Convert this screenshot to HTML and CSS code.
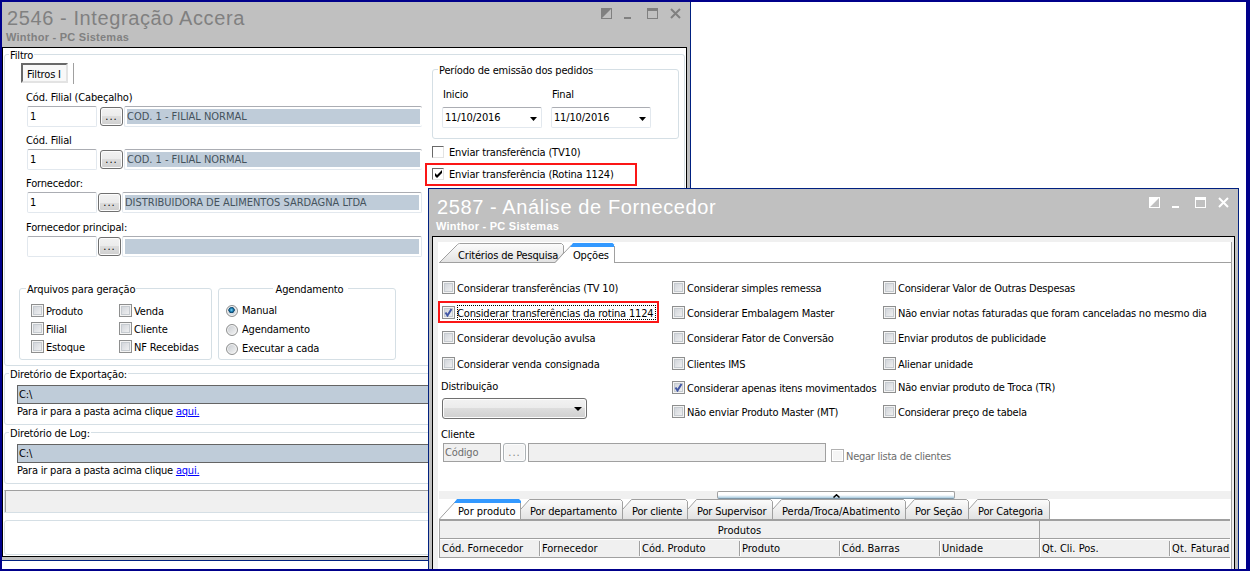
FILE: index.html
```html
<!DOCTYPE html>
<html lang="pt-BR">

<head>
    <meta charset="UTF-8">
    <meta name="viewport" content="width=device-width, initial-scale=1.0">
    <title>2587 - Análise de Fornecedor</title>
    <link rel="stylesheet" href="styles.css">
</head>

<body>
    <div class="desktop">

        <!-- 2546 -->
        <div class="window integracao">
            <div class="titlebar">
                <div>
                    <h1>2546 - Integração Accera</h1>
                    <h2>Winthor - PC Sistemas</h2>
                </div>
                <svg class="controls" width="80" height="11" viewBox="0 0 80 11">
                    <path d="M0 0H11V11H0ZM10 1V10H1Z" fill="currentColor" fill-rule="evenodd" />
                    <path d="M23 9h7v2h-7z" fill="currentColor" />
                    <path d="M46 0h11v11H46zM47 3v7h9V3z" fill="currentColor" fill-rule="evenodd" />
                    <path d="M70 1l9 9M79 1l-9 9" stroke="currentColor" stroke-width="2" />
                </svg>
            </div>
            <div class="content">
                <fieldset class="filtro">
                    <legend>Filtro</legend>
                    <div class="columns">
                        <div class="left">
                            <div class="toolbar">
                                <span class="pressed">Filtros I</span>
                            </div>
                            <div class="field">
                                <label>Cód. Filial (Cabeçalho)</label>
                                <div class="row">
                                    <span class="input">1</span>
                                    <span class="btn">...</span>
                                    <span class="readonly open"><b>COD. 1 - FILIAL NORMAL</b></span>
                                </div>
                            </div>
                            <div class="field">
                                <label>Cód. Filial</label>
                                <div class="row">
                                    <span class="input">1</span>
                                    <span class="btn">...</span>
                                    <span class="readonly open"><b>COD. 1 - FILIAL NORMAL</b></span>
                                </div>
                            </div>
                            <div class="field">
                                <label>Fornecedor:</label>
                                <div class="row near">
                                    <span class="input">1</span>
                                    <span class="btn">...</span>
                                    <span class="readonly"><b>DISTRIBUIDORA DE ALIMENTOS SARDAGNA LTDA</b></span>
                                </div>
                            </div>
                            <div class="field last">
                                <label>Fornecedor principal:</label>
                                <div class="row near">
                                    <span class="input"></span>
                                    <span class="btn">...</span>
                                    <span class="readonly"><b></b></span>
                                </div>
                            </div>
                            <div class="groups">
                                <fieldset class="arquivos">
                                    <legend>Arquivos para geração</legend>
                                    <div class="checks">
                                        <label class="check"><i></i>Produto</label>
                                        <label class="check"><i></i>Venda</label>
                                        <label class="check"><i></i>Filial</label>
                                        <label class="check"><i></i>Cliente</label>
                                        <label class="check"><i></i>Estoque</label>
                                        <label class="check"><i></i>NF Recebidas</label>
                                    </div>
                                </fieldset>
                                <fieldset class="agendamento">
                                    <legend>Agendamento</legend>
                                    <label class="radio"><i class="on"></i>Manual</label>
                                    <label class="radio"><i></i>Agendamento</label>
                                    <label class="radio"><i></i>Executar a cada</label>
                                </fieldset>
                            </div>
                        </div>
                        <div class="right">
                            <fieldset class="periodo">
                                <legend>Período de emissão dos pedidos</legend>
                                <div class="dates">
                                    <div>
                                        <label>Inicio</label>
                                        <span class="input date">11/10/2016<svg width="7" height="4"><path d="M0 0h7L3.500 4z" /></svg></span>
                                    </div>
                                    <div>
                                        <label>Final</label>
                                        <span class="input date">11/10/2016<svg width="7" height="4"><path d="M0 0h7L3.500 4z" /></svg></span>
                                    </div>
                                </div>
                            </fieldset>
                            <label class="check sunken"><i></i>Enviar transferência (TV10)</label>
                            <label class="check sunken marked"><i><svg width="9" height="9"><path d="M1 3v3l2 2 5-5V0L3 5z" /></svg></i>Enviar transferência (Rotina 1124)</label>
                        </div>
                    </div>
                </fieldset>
                <fieldset class="dir">
                    <legend>Diretório de Exportação:</legend>
                    <span class="path">C:\</span>
                    <p>Para ir para a pasta acima clique <a href="#">aqui.</a></p>
                </fieldset>
                <fieldset class="dir">
                    <legend>Diretório de Log:</legend>
                    <span class="path">C:\</span>
                    <p>Para ir para a pasta acima clique <a href="#">aqui.</a></p>
                </fieldset>
                <div class="progress"></div>
                <div class="bottom"></div>
            </div>
        </div>

        <!-- 2587 -->
        <div class="window fornecedor">
            <div class="titlebar">
                <div>
                    <h1>2587 - Análise de Fornecedor</h1>
                    <h2>Winthor - PC Sistemas</h2>
                </div>
                <svg class="controls" width="80" height="11" viewBox="0 0 80 11">
                    <path d="M0 0H11V11H0ZM10 1V10H1Z" fill="currentColor" fill-rule="evenodd" />
                    <path d="M23 9h7v2h-7z" fill="currentColor" />
                    <path d="M46 0h11v11H46zM47 3v7h9V3z" fill="currentColor" fill-rule="evenodd" />
                    <path d="M70 1l9 9M79 1l-9 9" stroke="currentColor" stroke-width="2" />
                </svg>
            </div>
            <div class="content">
                <div class="pane">
                    <div class="tabs top">
                        <div class="tab t1">
                            <svg width="125" height="20"><path d="M.5 19.500L18.500 1.500q1-1 2-1H122.500l2 2V10l-8 9.500z" fill="url(#shade)" stroke="#a0a0a0" /></svg>
                            <span>Critérios de Pesquisa</span>
                        </div>
                        <div class="tab t2">
                            <svg width="61" height="20"><path d="M0 20L17 1.500h42V20z" fill="#fff" /><path d="M0 19.500L16.500 2M59.500 3V19.500" fill="none" stroke="#a0a0a0" /><path d="M15 4L18 0H57.500L59 1.500V4z" fill="#3399ff" /></svg>
                            <span>Opções</span>
                        </div>
                    </div>

                    <div class="options">
                        <div class="column c1">
                            <label class="check"><i></i>Considerar transferências (TV 10)</label>
                            <label class="check marked"><i><svg width="9" height="9"><path d="M1.500 4.500L3.500 7.500 7.500 1" fill="none" stroke="#4257a5" stroke-width="2" /></svg></i>Considerar transferências da rotina 1124</label>
                            <label class="check"><i></i>Considerar devolução avulsa</label>
                            <label class="check"><i></i>Considerar venda consignada</label>
                            <span class="caption">Distribuição</span>
                            <span class="combo"><svg width="8" height="4"><path d="M0 0h8L4 4z" /></svg></span>
                        </div>
                        <div class="column c2">
                            <label class="check"><i></i>Considerar simples remessa</label>
                            <label class="check"><i></i>Considerar Embalagem Master</label>
                            <label class="check"><i></i>Considerar Fator de Conversão</label>
                            <label class="check"><i></i>Clientes IMS</label>
                            <label class="check"><i><svg width="9" height="9"><path d="M1.500 4.500L3.500 7.500 7.500 1" fill="none" stroke="#4257a5" stroke-width="2" /></svg></i>Considerar apenas itens movimentados</label>
                            <label class="check"><i></i>Não enviar Produto Master (MT)</label>
                        </div>
                        <div class="column c3">
                            <label class="check"><i></i>Considerar Valor de Outras Despesas</label>
                            <label class="check"><i></i>Não enviar notas faturadas que foram canceladas no mesmo dia</label>
                            <label class="check"><i></i>Enviar produtos de publicidade</label>
                            <label class="check"><i></i>Alienar unidade</label>
                            <label class="check"><i></i>Não enviar produto de Troca (TR)</label>
                            <label class="check"><i></i>Considerar preço de tabela</label>
                        </div>
                    </div>

                    <div class="cliente">
                        <span class="caption">Cliente</span>
                        <div class="row">
                            <span class="disabled code">Código</span>
                            <span class="btn">...</span>
                            <span class="disabled name"></span>
                            <label class="check off"><i></i>Negar lista de clientes</label>
                        </div>
                    </div>

                    <div class="splitter">
                        <span class="handle"><svg width="7" height="4"><path d="M.5 3.500L3.500 .8 6.500 3.500" fill="none" stroke="#000" stroke-width="1.500" /></svg></span>
                    </div>

                    <div class="tabs">
                        <div class="tab w1">
                            <svg width="82" height="20"><path d="M.5 20L17 2M81.500 2V20" fill="none" stroke="#a0a0a0" /><path d="M15 4L18 0H80L82 2V4z" fill="#3399ff" /></svg>
                            <span>Por produto</span>
                        </div>
                        <div class="tab">
                            <svg width="102" height="20"><path d="M0 20V10L8.500 .5H99.500l2 2V20" fill="url(#shade)" /><path d="M0 10L8.500 .5H99.500l2 2V20" fill="none" stroke="#a0a0a0" /></svg>
                            <span>Por departamento</span>
                        </div>
                        <div class="tab">
                            <svg width="65" height="20"><path d="M0 20V10L8.500 .5H62.500l2 2V20" fill="url(#shade)" /><path d="M0 10L8.500 .5H62.500l2 2V20" fill="none" stroke="#a0a0a0" /></svg>
                            <span>Por cliente</span>
                        </div>
                        <div class="tab">
                            <svg width="85" height="20"><path d="M0 20V10L8.500 .5H82.500l2 2V20" fill="url(#shade)" /><path d="M0 10L8.500 .5H82.500l2 2V20" fill="none" stroke="#a0a0a0" /></svg>
                            <span>Por Supervisor</span>
                        </div>
                        <div class="tab">
                            <svg width="133" height="20"><path d="M0 20V10L8.500 .5H130.500l2 2V20" fill="url(#shade)" /><path d="M0 10L8.500 .5H130.500l2 2V20" fill="none" stroke="#a0a0a0" /></svg>
                            <span class="wide">Perda/Troca/Abatimento</span>
                        </div>
                        <div class="tab">
                            <svg width="63" height="20"><path d="M0 20V10L8.500 .5H60.500l2 2V20" fill="url(#shade)" /><path d="M0 10L8.500 .5H60.500l2 2V20" fill="none" stroke="#a0a0a0" /></svg>
                            <span>Por Seção</span>
                        </div>
                        <div class="tab">
                            <svg width="81" height="20"><path d="M0 20V10L8.500 .5H78.500l2 2V20" fill="url(#shade)" /><path d="M0 10L8.500 .5H78.500l2 2V20" fill="none" stroke="#a0a0a0" /></svg>
                            <span>Por Categoria</span>
                        </div>
                    </div>

                    <div class="table">
                        <div class="bands">
                            <span>Produtos</span>
                            <span></span>
                        </div>
                        <div class="heads">
                            <span>Cód. Fornecedor</span>
                            <span>Fornecedor</span>
                            <span>Cód. Produto</span>
                            <span>Produto</span>
                            <span>Cód. Barras</span>
                            <span class="end">Unidade</span>
                            <span>Qt. Cli. Pos.</span>
                            <span>Qt. Faturad</span>
                        </div>
                    </div>
                </div>
            </div>
        </div>

        <svg class="defs" width="0" height="0">
            <linearGradient id="shade" x1="0" y1="0" x2="0" y2="1">
                <stop offset="0" stop-color="#fcfcfc" />
                <stop offset="1" stop-color="#e2e2e2" />
            </linearGradient>
        </svg>
    </div>
</body>

</html>
```
FILE: styles.css
```css
*,
*::after,
*::before {
    box-sizing: border-box;
}

body {
    margin: 0;
    font-family: "DejaVu Sans Condensed", "DejaVu Sans", Tahoma, sans-serif;
    font-stretch: condensed;
    font-size: 11px;
    line-height: 13px;
    letter-spacing: -0.17px;
    color: #000;
    white-space: nowrap;
}

.desktop {
    position: relative;
    width: 1250px;
    height: 571px;
    overflow: hidden;
    background-color: #fff;
    border: 2px solid #00008b;
    border-right-width: 4px;
}

.defs {
    position: absolute;
}

/* windows */
.window {
    position: absolute;
    display: flex;
    flex-direction: column;
    padding: 0 3px 3px;
    background-color: #c0c0c0;
    border: 1px solid #002080;
}

.integracao {
    left: -4px;
    top: -3px;
    width: 693px;
    height: 562px;
    color: #000;
}

.fornecedor {
    left: 426px;
    top: 186px;
    width: 811px;
    height: 400px;
}

.titlebar {
    display: flex;
    justify-content: space-between;
    height: 47px;
    padding: 8px 6px 0 5px;
    color: #fff;
}

.integracao .titlebar {
    color: #808080;
}

h1,
h2 {
    margin: 0;
    font-family: "Liberation Sans", Arial, sans-serif;
    font-stretch: normal;
}

h1 {
    margin-top: -1px;
    font-size: 20px;
    line-height: 22px;
    font-weight: normal;
    letter-spacing: 0.6px;
}

h2 {
    margin: 2px 0 0 -1px;
    font-size: 11px;
    line-height: 13px;
    letter-spacing: 0.25px;
}

.controls {
    flex: none;
}

.content {
    flex: 1;
    min-height: 0;
    border: 1px solid #000;
    background-color: #fff;
}

/* group boxes */
fieldset {
    min-width: 0;
    margin: 0;
    padding: 0;
    border: 1px solid #d5dfe5;
    border-radius: 3px;
}

legend {
    height: 13px;
    line-height: 15px;
    padding: 0 1px;
    margin-left: 4px;
}

label,
.caption {
    display: block;
}

.row {
    display: flex;
    align-items: center;
}

.integracao .content {
    padding: 0 1px;
}

.filtro {
    height: 318px;
}

.columns {
    display: flex;
}

.left {
    width: 427px;
    padding: 2px 0 0 14px;
}

.toolbar {
    display: flex;
    width: 53px;
    height: 21px;
    margin-left: 2px;
    border-right: 1px solid #a0a0a0;
    margin-bottom: 7px;
}

.pressed {
    width: 47px;
    height: 20px;
    padding: 3px 0 0 4px;
    background-color: #f8f8f8;
    border: 2px solid #e3e3e3;
    border-top-color: #696969;
    border-left-color: #696969;
}

.field {
    height: 43px;
    padding-left: 8px;
}

.field.last {
    padding-top: 1px;
    height: 62px;
}

.field .row {
    width: 395px;
    margin-top: 2px;
}

.field label {
    margin-left: -1px;
}

.input,
.readonly {
    display: block;
    height: 21px;
    border: 1px solid #e2e8ee;
    border-top-color: #abadb3;
    border-radius: 2px;
    background-color: #fff;
}

.input {
    width: 70px;
    padding: 3px 2px;
}

.btn {
    width: 23px;
    height: 19px;
    margin: 0 1px 0 3px;
    padding-top: 2px;
    text-align: center;
    letter-spacing: 1px;
    border: 1px solid #707070;
    border-radius: 3px;
    box-shadow: inset 0 0 0 1px #fcfcfc;
    background: linear-gradient(#f2f2f2, #ebebeb 50%, #dddddd 50%, #cfcfcf);
}

.near .btn {
    margin-left: 1px;
}

.readonly {
    flex: 1;
    padding: 2px;
}

.readonly.open {
    border-right: none;
}

.readonly b {
    display: block;
    height: 15px;
    line-height: 16px;
    font-weight: normal;
    letter-spacing: -0.02px;
    color: #44525c;
    background-color: #bfccd9;
}

.groups {
    display: flex;
    gap: 6px;
}

.arquivos {
    width: 193px;
    height: 78px;
}

.arquivos legend {
    margin-left: 6px;
}

.agendamento {
    width: 178px;
    height: 78px;
    padding-left: 7px;
}

.agendamento legend {
    margin: 0 auto;
    padding: 0 5px 0 3px;
}

.checks {
    display: grid;
    grid-template-columns: 88px 100px;
    grid-auto-rows: 18px;
    padding: 9px 0 0 11px;
}

.check,
.radio {
    display: flex;
    position: relative;
    height: 13px;
    line-height: 15px;
}

.check i {
    flex: none;
    width: 13px;
    height: 13px;
    margin-right: 2px;
    padding: 1px;
    border: 1px solid #8e8f8f;
    box-shadow: inset 0 0 0 1px #f4f4f4, inset 0 0 0 2px #c6cbd0;
    background: linear-gradient(135deg, #cbcfd5, #f6f6f6);
}

.check svg {
    display: block;
}

.radio {
    height: 19px;
    line-height: 14px;
}

.agendamento .radio:first-of-type {
    margin-top: 9px;
}

.radio i {
    width: 12px;
    height: 12px;
    margin: 1px 4px 0 0;
    border: 1px solid #8e8f8f;
    border-radius: 50%;
    box-shadow: inset 0 0 0 1px #f4f4f4;
    background: linear-gradient(135deg, #c5c9ce, #f6f6f6);
}

.radio i.on {
    background: radial-gradient(circle at 45% 40%, #7fd4f5 0, #1b7fb5 20%, #0b3c5f 36%, #d8dde2 42%);
}

.periodo {
    width: 247px;
    height: 76px;
    margin: 2px 0 7px;
}

.periodo legend {
    margin-left: 5px;
}

.dates {
    display: flex;
    gap: 9px;
    padding: 12px 0 0 9px;
}

.dates label {
    margin: 0 0 6px 1px;
}

.date {
    position: relative;
    width: 100px;
}

.date svg {
    position: absolute;
    right: 4px;
    top: 9px;
}

.sunken {
    margin-bottom: 9px;
    line-height: 13px;
}

.sunken i {
    width: 12px;
    height: 12px;
    margin-right: 5px;
    background: #fff;
    box-shadow: none;
    border: 1px solid #e3e3e3;
    border-top-color: #696969;
    border-left-color: #696969;
}

/* red highlight around a checkbox */
.marked::before {
    content: "";
    position: absolute;
    left: -7px;
    top: -5px;
    width: 212px;
    height: 23px;
    border: 2px solid #fb1616;
}

.dir {
    height: 58px;
    margin-top: 1px;
}

.path {
    display: block;
    height: 19px;
    margin: 5px 10px 0 12px;
    padding: 2px 1px;
    border: 1px solid #646464;
    background-color: #bfccd9;
}

.dir p {
    margin: 1px 0 0 12px;
    letter-spacing: -0.21px;
}

.dir a {
    color: #0000ff;
}

.progress {
    height: 23px;
    margin-top: 6px;
    border: 1px solid #d5dfe5;
    border-top-color: #a0a0a0;
    background-color: #f0f0f0;
    box-shadow: inset 1px 0 #a0a0a0;
}

.bottom {
    height: 35px;
    margin-top: 7px;
    border: 1px solid #d5dfe5;
    border-radius: 3px;
}

/* analise de fornecedor */
.fornecedor .content {
    padding: 5px 2px 0 5px;
    background-color: #f0f0f0;
}

.pane {
    height: 100%;
    padding-left: 1px;
    background-color: #fff;
    border-right: 1px solid #a0a0a0;
}

.tabs {
    display: flex;
    height: 20px;
}

.tabs.top {
    height: 21px;
    padding-top: 1px;
    background: linear-gradient(#a0a0a0, #a0a0a0) bottom / 100% 1px no-repeat;
}

.tab {
    display: grid;
}

.tab svg,
.tab span {
    grid-area: 1 / 1;
}

.tab span {
    padding: 6px 0 0 9px;
}

.tab .wide {
    letter-spacing: 0;
}

.tab.t1 span,
.tab.t2 span,
.tab.w1 span {
    padding-left: 19px;
}

.tab.w1 span {
    letter-spacing: 0;
}

.tab.t2 {
    margin-left: -9px;
}

.tab.t2 span {
    padding-left: 18px;
}

.options {
    display: grid;
    grid-template-columns: 230px 211px 1fr;
    padding: 18px 0 0 3px;
}

.column {
    display: grid;
    grid-template-rows: 25px 25px 26px 24px 24px 22px;
}

.c2,
.c3 {
    letter-spacing: -0.21px;
}

.c3 {
    grid-template-rows: 25px 25px 26px 23px 25px 22px;
}

.c1 {
    grid-template-rows: 25px 25px 26px 23px 18px 22px;
}

.c1 .marked::before {
    left: -4px;
    top: -5px;
    width: 221px;
    height: 22px;
}

.c1 .marked::after {
    content: "";
    position: absolute;
    left: 15px;
    top: -1px;
    width: 199px;
    height: 15px;
    border: 1px dotted #000;
}

.fornecedor .caption {
    margin-left: -1px;
}

.combo {
    width: 145px;
    height: 21px;
    padding: 8px 4px 0;
    text-align: right;
    line-height: 0;
    border: 1px solid #707070;
    border-radius: 3px;
    box-shadow: inset 0 0 0 1px #fcfcfc;
    background: linear-gradient(#f2f2f2, #ebebeb 50%, #dddddd 50%, #cfcfcf);
}

.cliente {
    height: 64px;
    padding: 1px 0 0 3px;
}

.cliente .row {
    margin: 2px 0 0 1px;
}

.disabled {
    height: 19px;
    padding: 2px 1px;
    color: #6d6d6d;
    border: 1px solid #a0a0a0;
    background-color: #f0f0f0;
}

.code {
    width: 58px;
}

.name {
    width: 298px;
}

.cliente .btn {
    margin: 0 2px;
    color: #838383;
    border-color: #adb2b5;
    background: #f4f4f4;
}

.off {
    margin: 5px 0 0 5px;
    letter-spacing: -0.25px;
    color: #6d6d6d;
}

.off i {
    border-color: #b1b1b1;
    box-shadow: inset 0 0 0 1px #fff;
    background: #f5f5f5;
}

.splitter {
    height: 8px;
    background-color: #f0f0f0;
}

.handle {
    display: block;
    width: 238px;
    height: 8px;
    margin-left: 278px;
    padding-top: 2px;
    text-align: center;
    line-height: 0;
    border: 1px solid #a0a0a0;
    border-bottom-color: #7e97a8;
    border-radius: 2px;
    background: linear-gradient(#fff 50%, #a9cbe0);
}

.table {
    border-top: 2px solid #a0a0a0;
    border-left: 1px solid #a0a0a0;
    margin-right: 1px;
    letter-spacing: 0;
}

.bands,
.heads {
    display: flex;
    height: 18px;
    background-color: #f0f0f0;
    border-bottom: 1px solid #a0a0a0;
}

.heads {
    height: 19px;
    padding-top: 2px;
    box-shadow: inset 0 1px #fff;
}

.bands span {
    width: 600px;
    padding-top: 3px;
    text-align: center;
    border-right: 1px solid #a0a0a0;
}

.bands span + span {
    flex: 1;
    border: none;
}

.heads span {
    width: 100px;
    height: 15px;
    padding: 1px 0 0 2px;
    overflow: hidden;
    border-right: 1px solid #a0a0a0;
    box-shadow: 1px 0 #fff;
}

.heads .end {
    height: 18px;
    margin-top: -2px;
    padding-top: 3px;
}

.heads .end + span {
    width: 130px;
}

.heads span:last-child {
    flex: 1;
    border: none;
    letter-spacing: 0.2px;
}
```
